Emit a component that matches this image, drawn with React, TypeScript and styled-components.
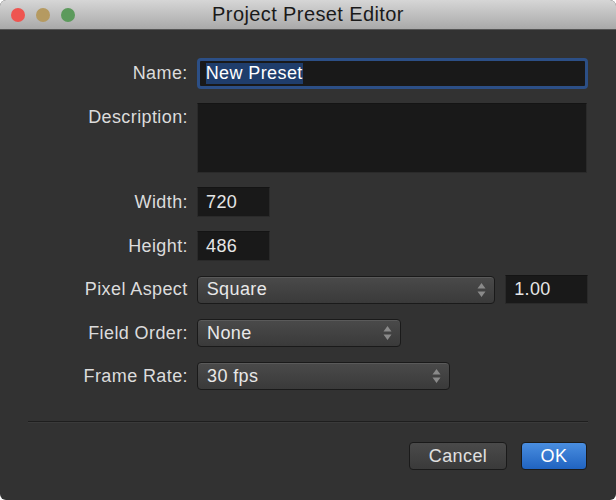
import React from "react";
import styled, { createGlobalStyle } from "styled-components";

const Global = createGlobalStyle`
  html, body { margin: 0; background: #fff; }
  body { font-family: "Liberation Sans", Arial, sans-serif; letter-spacing: 0.4px; }
`;

const Window = styled.div`
  width: 616px;
  height: 500px;
  border-radius: 6px;
  overflow: hidden;
  background: #323232;
  display: flex;
  flex-direction: column;
`;

const TitleBar = styled.div`
  height: 29px;
  flex-shrink: 0;
  background: linear-gradient(#d6d6d6, #a9a9a9);
  border-bottom: 1px solid #555;
  display: flex;
  align-items: center;
  position: relative;
  justify-content: center;
  font-size: 20px;
  color: #1a1a1a;
`;

const Lights = styled.div`
  position: absolute;
  left: 11px;
  top: 8px;
  display: flex;
  gap: 11px;
`;

const Light = styled.span<{ $c: string }>`
  width: 14px;
  height: 14px;
  border-radius: 50%;
  background: ${(p) => p.$c};
`;

const Form = styled.div`
  display: flex;
  flex-direction: column;
  gap: 14px;
  padding: 28px 28px 0 20px;
`;

const Row = styled.div<{ $top?: boolean; $gap?: number }>`
  display: flex;
  align-items: ${(p) => (p.$top ? "flex-start" : "center")};
  margin-top: ${(p) => p.$gap ?? 0}px;
`;

const Label = styled.div<{ $top?: boolean }>`
  width: 168px;
  margin-right: 9px;
  text-align: right;
  color: #dcdcdc;
  font-size: 18px;
  white-space: nowrap;
  padding-top: ${(p) => (p.$top ? "4px" : "0")};
`;

const Field = styled.div<{ $w?: number; $h: number }>`
  box-sizing: border-box;
  width: ${(p) => (p.$w ? `${p.$w}px` : "390px")};
  height: ${(p) => p.$h}px;
  background: #191919;
  border: 1px solid #2a2a2a;
  border-top-color: #141414;
  color: #e6e6e6;
  font-size: 18px;
  display: flex;
  align-items: center;
  padding-left: 8px;
`;

const Focus = styled(Field)`
  width: 392px;
  border: 3px solid #2c4f86;
  border-radius: 4px;
  padding-left: 6px;
`;

const Selected = styled.span`
  background: #1f3d6b;
  color: #fff;
`;

const Popup = styled.div<{ $w: number; $h: number }>`
  box-sizing: border-box;
  width: ${(p) => p.$w}px;
  height: ${(p) => p.$h}px;
  border-radius: 4px;
  border: 1px solid #1a1a1a;
  background: linear-gradient(#4a4a4a, #3a3a3a);
  box-shadow: inset 0 1px 0 #5a5a5a;
  color: #e8e8e8;
  font-size: 18px;
  display: flex;
  align-items: center;
  justify-content: space-between;
  padding: 0 8px 0 9px;
`;

const Arrows = () => (
  <svg width="9" height="16" viewBox="0 0 9 16">
    <path d="M4.5 1 L8.5 6.5 H0.5 Z M4.5 15 L8.5 9.5 H0.5 Z" fill="#8a8a8a" />
  </svg>
);

const Separator = styled.div`
  margin: 31px 28px 0 28px;
  height: 1px;
  background: #1e1e1e;
  border-bottom: 1px solid #3a3a3a;
`;

const Buttons = styled.div`
  display: flex;
  justify-content: flex-end;
  gap: 14px;
  padding: 19px 29px 0 0;
`;

const Button = styled.div<{ $primary?: boolean; $w: number }>`
  box-sizing: border-box;
  width: ${(p) => p.$w}px;
  height: 28px;
  border-radius: 4px;
  border: 1px solid #1a1a1a;
  background: ${(p) =>
    p.$primary ? "linear-gradient(#4a8ee0, #2063c0)" : "linear-gradient(#4a4a4a, #3a3a3a)"};
  color: ${(p) => (p.$primary ? "#fff" : "#e0e0e0")};
  font-size: 18px;
  display: flex;
  align-items: center;
  justify-content: center;
`;

export default function App() {
  return (
    <>
      <Global />
      <Window>
        <TitleBar>
          <Lights>
            <Light $c="#ee5550" />
            <Light $c="#b59a61" />
            <Light $c="#5c9a5c" />
          </Lights>
          Project Preset Editor
        </TitleBar>
        <Form>
          <Row>
            <Label>Name:</Label>
            <Focus $h={31}>
              <Selected>New Preset</Selected>
            </Focus>
          </Row>
          <Row $top>
            <Label $top>Description:</Label>
            <Field $h={70} />
          </Row>
          <Row>
            <Label>Width:</Label>
            <Field $w={73} $h={30}>720</Field>
          </Row>
          <Row>
            <Label>Height:</Label>
            <Field $w={73} $h={30}>486</Field>
          </Row>
          <Row>
            <Label>Pixel Aspect</Label>
            <Popup $w={299} $h={28}>
              Square
              <Arrows />
            </Popup>
            <Field $w={83} $h={29} style={{ marginLeft: 10 }}>1.00</Field>
          </Row>
          <Row $gap={1}>
            <Label>Field Order:</Label>
            <Popup $w={204} $h={28}>
              None
              <Arrows />
            </Popup>
          </Row>
          <Row $gap={1}>
            <Label>Frame Rate:</Label>
            <Popup $w={253} $h={28}>
              30 fps
              <Arrows />
            </Popup>
          </Row>
        </Form>
        <Separator />
        <Buttons>
          <Button $w={98}>Cancel</Button>
          <Button $w={66} $primary>
            OK
          </Button>
        </Buttons>
      </Window>
    </>
  );
}
